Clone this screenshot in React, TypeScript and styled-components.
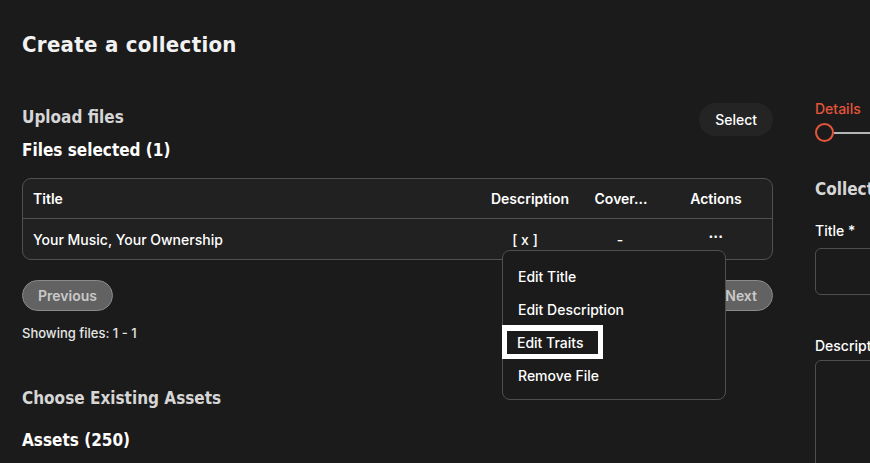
import React from "react";
import styled, { createGlobalStyle } from "styled-components";

const GlobalStyle = createGlobalStyle`
  html, body {
    margin: 0;
    padding: 0;
    background: #1b1b1b;
    overflow: hidden;
  }
  body {
    font-family: Inter, "Liberation Sans", sans-serif;
    color: #ffffff;
  }
`;

const menuItems = ["Edit Title", "Edit Description", "Edit Traits", "Remove File"];

const App = () => {
  return (
    <>
      <GlobalStyle />
      <SPage>
        <SPageTitle>Create a collection</SPageTitle>
        <SColumns>
          <SLeft>
            <SUploadRow>
              <SHeadings>
                <SSubTitle>Upload files</SSubTitle>
                <SCount>Files selected (1)</SCount>
              </SHeadings>
              <SSelectButton>Select</SSelectButton>
            </SUploadRow>

            <STableWrap>
              <STable>
                <SHeadRow>
                  <SCell>Title</SCell>
                  <SCell $align="center">Description</SCell>
                  <SCell $align="center">Cover...</SCell>
                  <SCell $align="center">Actions</SCell>
                </SHeadRow>
                <SBodyRow>
                  <SCell>Your Music, Your Ownership</SCell>
                  <SCell $align="center" $padRight={10}>[ x ]</SCell>
                  <SCell $align="center" $padRight={2}>-</SCell>
                  <SCell $align="center">
                    <SDots>•••</SDots>
                  </SCell>
                </SBodyRow>
              </STable>
              <SMenu>
                {menuItems.map((item) => (
                  <SMenuItem key={item} $active={item === "Edit Traits"}>
                    {item}
                  </SMenuItem>
                ))}
              </SMenu>
            </STableWrap>

            <SPager>
              <SPageButton>Previous</SPageButton>
              <SPageButton>Next</SPageButton>
            </SPager>
            <SShowing>Showing files: 1 - 1</SShowing>

            <SAssets>
              <SSubTitle>Choose Existing Assets</SSubTitle>
              <SCount>Assets (250)</SCount>
            </SAssets>
          </SLeft>

          <SRight>
            <SStep>
              <SStepLabel>Details</SStepLabel>
              <SStepper>
                <SStepDot />
                <SStepLine />
              </SStepper>
            </SStep>
            <SFormTitle>Collection Details</SFormTitle>
            <SField>
              <SLabel>Title *</SLabel>
              <SInput />
            </SField>
            <SField>
              <SLabel>Description</SLabel>
              <STextArea />
            </SField>
          </SRight>
        </SColumns>
      </SPage>
    </>
  );
};

const SPage = styled.main`
  padding: 30px 0 0 22px;
  width: 1100px;
`;

const SPageTitle = styled.h1`
  margin: 0;
  font-family: "DejaVu Sans Condensed", "DejaVu Sans", sans-serif;
  font-stretch: condensed;
  font-weight: 700;
  font-size: 22px;
  line-height: 30px;
  letter-spacing: 0.3px;
  color: #f2f2f2;
`;

const SColumns = styled.div`
  display: flex;
  gap: 42px;
  margin-top: 43px;
`;

const SLeft = styled.section`
  width: 751px;
  flex-shrink: 0;
`;

const SUploadRow = styled.div`
  display: flex;
  justify-content: space-between;
  align-items: flex-start;
`;

const SHeadings = styled.div`
  display: flex;
  flex-direction: column;
  gap: 7px;
  padding-top: 1px;
`;

const SAssets = styled(SHeadings)`
  gap: 16px;
  padding-top: 44px;
`;

const SSubTitle = styled.h2`
  margin: 0;
  font-family: "DejaVu Sans Condensed", "DejaVu Sans", sans-serif;
  font-stretch: condensed;
  font-weight: 700;
  font-size: 17px;
  line-height: 26px;
  color: #d6d6d6;
`;

const SCount = styled(SSubTitle)`
  color: #ffffff;
`;

const SSelectButton = styled.button`
  height: 33px;
  padding: 0 16px;
  border: none;
  border-radius: 17px;
  background: #242424;
  color: #ffffff;
  font-family: Inter, sans-serif;
  font-weight: 500;
  font-size: 14px;
`;

const STableWrap = styled.div`
  position: relative;
  margin-top: 15px;
`;

const STable = styled.div`
  border: 1px solid #515151;
  border-radius: 9px;
  background: #212121;
  overflow: hidden;
`;

const SHeadRow = styled.div`
  display: grid;
  grid-template-columns: 455px 104px 78px 1fr;
  height: 39px;
  align-items: center;
  border-bottom: 1px solid #515151;
  font-weight: 600;
`;

const SBodyRow = styled(SHeadRow)`
  height: 40px;
  border-bottom: none;
  font-weight: 500;
`;

const SCell = styled.div<{ $align?: string; $padRight?: number }>`
  padding-left: ${({ $align }) => ($align === "center" ? "0" : "10px")};
  padding-right: ${({ $padRight }) => `${$padRight ?? 0}px`};
  text-align: ${({ $align }) => $align ?? "left"};
  font-size: 14px;
  color: #ffffff;
  white-space: nowrap;
`;

const SDots = styled.span`
  display: inline-block;
  font-size: 8px;
  letter-spacing: 0.5px;
  transform: translateY(-6px);
`;

const SMenu = styled.ul`
  position: absolute;
  top: 72px;
  left: 480px;
  width: 222px;
  margin: 0;
  padding: 9px 0 7px;
  list-style: none;
  background: #1b1b1b;
  border: 1px solid #4f4f4f;
  border-radius: 8px;
  z-index: 2;
  display: flex;
  flex-direction: column;
`;

const SMenuItem = styled.li<{ $active?: boolean }>`
  box-sizing: border-box;
  height: 33px;
  width: ${({ $active }) => ($active ? "101px" : "auto")};
  margin-left: ${({ $active }) => ($active ? "-1px" : "0")};
  padding-left: 15px;
  display: flex;
  align-items: center;
  font-size: 14px;
  font-weight: 500;
  color: #ffffff;
  box-shadow: ${({ $active }) =>
    $active ? "inset 0 0 0 5px #ffffff, 0 -1px 0 0 #ffffff" : "none"};
`;

const SPager = styled.div`
  display: flex;
  justify-content: space-between;
  margin-top: 20px;
`;

const SPageButton = styled.button`
  height: 31px;
  padding: 0 15px;
  border: 1px solid #8a8a8a;
  border-radius: 16px;
  background: #626262;
  color: #c9c9c9;
  font-family: Inter, sans-serif;
  font-weight: 600;
  font-size: 14px;
`;

const SShowing = styled.div`
  margin-top: 14px;
  font-size: 13px;
  font-weight: 500;
  color: #e6e6e6;
`;

const SRight = styled.section`
  width: 300px;
  flex-shrink: 0;
  display: flex;
  flex-direction: column;
`;

const SStep = styled.div`
  display: flex;
  flex-direction: column;
  gap: 6px;
`;

const SStepLabel = styled.div`
  margin-top: -3px;
  font-size: 14px;
  font-weight: 500;
  color: #e4553b;
`;

const SStepper = styled.div`
  display: flex;
  align-items: center;
`;

const SStepDot = styled.div`
  box-sizing: border-box;
  width: 19px;
  height: 19px;
  border: 2px solid #e4553b;
  border-radius: 50%;
`;

const SStepLine = styled.div`
  width: 200px;
  height: 2px;
  background: #b5b5b5;
`;

const SFormTitle = styled.h2`
  margin: 34px 0 0;
  font-family: "DejaVu Sans Condensed", "DejaVu Sans", sans-serif;
  font-stretch: condensed;
  font-weight: 700;
  font-size: 17px;
  line-height: 26px;
  color: #d6d6d6;
`;

const SField = styled.div`
  display: flex;
  flex-direction: column;
  gap: 9px;
  margin-top: 20px;

  & + & {
    margin-top: 42px;
    gap: 6px;
  }
`;

const SLabel = styled.label`
  font-size: 14px;
  font-weight: 500;
  color: #ffffff;
`;

const SInput = styled.div`
  height: 45px;
  border: 1px solid #4f4f4f;
  border-radius: 6px;
`;

const STextArea = styled(SInput)`
  height: 140px;
`;

export default App;
